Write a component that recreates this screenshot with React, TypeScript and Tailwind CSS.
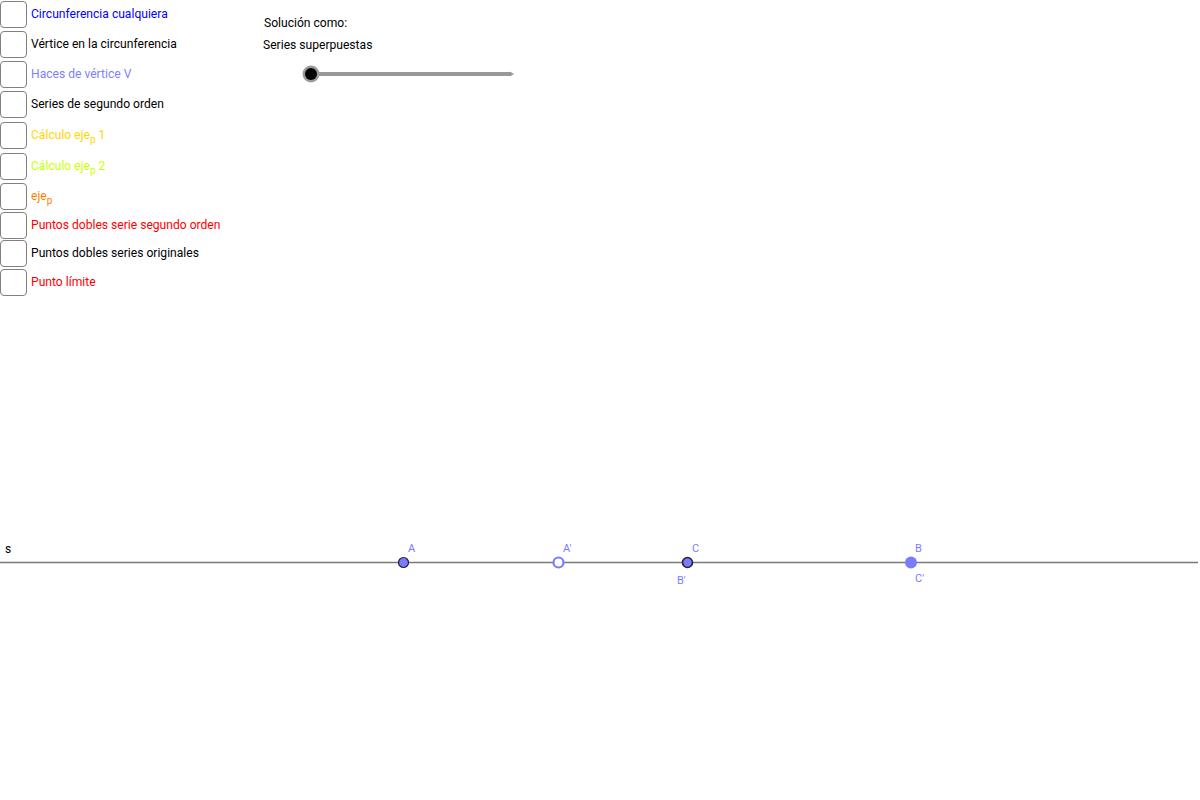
import React from "react";

const Sub = () => <sub className="text-[10px] relative top-[4px]">p</sub>;

const items: { label: React.ReactNode; color: string; top: number }[] = [
  { label: "Circunferencia cualquiera", color: "text-[#0000ff]", top: 1 },
  { label: "Vértice en la circunferencia", color: "text-black", top: 31 },
  { label: "Haces de vértice V", color: "text-[#7f7fff]", top: 61 },
  { label: "Series de segundo orden", color: "text-black", top: 91 },
  {
    label: (
      <>
        Cálculo eje<Sub /> 1
      </>
    ),
    color: "text-[#ffd700]",
    top: 122,
  },
  {
    label: (
      <>
        Cálculo eje<Sub /> 2
      </>
    ),
    color: "text-[#ccff00]",
    top: 153,
  },
  {
    label: (
      <>
        eje<Sub />
      </>
    ),
    color: "text-[#ff7f00]",
    top: 183,
  },
  { label: "Puntos dobles serie segundo orden", color: "text-[#ff0000]", top: 212 },
  { label: "Puntos dobles series originales", color: "text-black", top: 240 },
  { label: "Punto límite", color: "text-[#ff0000]", top: 269 },
];

export default function App() {
  return (
    <div
      className="relative w-[1200px] h-[800px] bg-white overflow-hidden text-[12.1px]"
      style={{ fontFamily: "Roboto, 'Liberation Sans', sans-serif" }}
    >
      {items.map((it, i) => (
        <div
          key={i}
          className="absolute left-0 flex items-center h-[27px]"
          style={{ top: it.top }}
        >
          <div className="w-[27px] h-[27px] border-[1.5px] border-[#808080] rounded-[4px] bg-white shrink-0" />
          <span className={`ml-[4px] leading-none ${it.color}`}>{it.label}</span>
        </div>
      ))}

      <div className="absolute left-[264px] top-[17px] text-black leading-none">Solución como:</div>
      <div className="absolute left-[263px] top-[39px] text-black leading-none">Series superpuestas</div>

      <svg className="absolute left-0 top-0" width="1200" height="800">
        {/* slider */}
        <line x1="310" y1="74" x2="511" y2="74" stroke="#999999" strokeWidth="4" />
        <polygon points="510,71.5 514,74 510,76.5" fill="#999999" />
        <circle cx="311" cy="74" r="8.5" fill="#9a9a9a" />
        <circle cx="311" cy="74" r="6" fill="#000000" />

        {/* line s */}
        <line x1="0" y1="562.5" x2="1198" y2="562.5" stroke="#7a7a7a" strokeWidth="1.6" />
        <text x="5" y="553" fontSize="12" fill="#000" fontFamily="Roboto, 'Liberation Sans', sans-serif">s</text>

        {/* points */}
        <circle cx="403.5" cy="562.5" r="5" fill="#7b7bff" stroke="#222244" strokeWidth="1.2" />
        <circle cx="558.5" cy="562.5" r="5" fill="#ffffff" stroke="#7b7bff" strokeWidth="2.2" />
        <circle cx="687.5" cy="562.5" r="5" fill="#7b7bff" stroke="#222244" strokeWidth="1.6" />
        <circle cx="911" cy="562.5" r="6" fill="#7b7bff" />

        <g fontSize="11" fill="#7b7bff" fontFamily="Roboto, 'Liberation Sans', sans-serif">
          <text x="408" y="552">A</text>
          <text x="563" y="552">A′</text>
          <text x="692" y="552">C</text>
          <text x="677" y="584">B′</text>
          <text x="915" y="552">B</text>
          <text x="915" y="582">C′</text>
        </g>
      </svg>
    </div>
  );
}
